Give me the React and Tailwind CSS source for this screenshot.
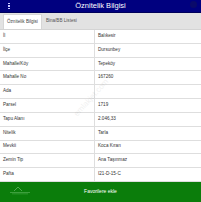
import React from "react";

const rows = [
  ["İl", "Balıkesir"],
  ["İlçe", "Dursunbey"],
  ["Mahalle/Köy", "Tepeköy"],
  ["Mahalle No", "167260"],
  ["Ada", ""],
  ["Parsel", "1719"],
  ["Tapu Alanı", "2.046,33"],
  ["Nitelik", "Tarla"],
  ["Mevkii", "Koca Kıran"],
  ["Zemin Tip", "Ana Taşınmaz"],
  ["Pafta", "I21-D-15-C"],
];

export default function App() {
  return (
    <div
      className="relative w-[201px] h-[202px] flex flex-col bg-white overflow-hidden"
      style={{ fontFamily: '"Liberation Sans", Arial, sans-serif' }}
    >
      <div className="h-[13px] bg-[#00007f] border-b border-[#00005a] flex items-center relative">
        <div className="w-[18px] flex flex-col items-center gap-[1px]">
          <span className="w-[1.5px] h-[1.5px] bg-[#c8c8ff]" />
          <span className="w-[1.5px] h-[1.5px] bg-[#c8c8ff]" />
          <span className="w-[1.5px] h-[1.5px] bg-[#c8c8ff]" />
        </div>
        <div className="flex-1 text-center text-white text-[7.5px] leading-none pr-[18px]">
          Öznitelik Bilgisi
        </div>
        <span className="absolute right-[4px] top-[1px] w-[7px] h-[7px] rounded-full bg-[#0a0a6a]" />
      </div>

      <div className="h-[17px] bg-[#e2e2e2] flex items-end px-[3px] border-b border-[#d4d4d4]">
        <div className="h-[15px] px-[3px] bg-white flex items-center text-[4.6px] text-[#444] border-t border-x border-[#d6d6d6]">
          Öznitelik Bilgisi
        </div>
        <div className="h-[15px] px-[4px] flex items-center text-[4.6px] text-[#555]">
          Bina/BB Listesi
        </div>
      </div>

      <div className="flex-1 flex flex-col">
        {rows.map(([k, v]) => (
          <div
            key={k}
            className="flex-1 flex border-b border-[#dedede] text-[4.6px] text-[#333]"
          >
            <div className="w-[95px] pl-[3px] flex items-center border-r border-[#dedede]">
              {k}
            </div>
            <div className="flex-1 pl-[3px] flex items-center">{v}</div>
          </div>
        ))}
      </div>

      <div className="h-[20px] bg-[#0b7d0b] flex items-center relative">
        <svg
          className="absolute left-[8px] top-[3px]"
          width="24"
          height="10"
          viewBox="0 0 24 10"
        >
          <path d="M6 6 L10 2 L14 6" stroke="#5fb55f" strokeWidth="0.8" fill="none" />
          <rect x="2" y="7" width="20" height="0.8" fill="#4aa84a" />
          <rect x="4" y="8.6" width="16" height="0.6" fill="#4aa84a" />
        </svg>
        <div className="flex-1 text-center text-white text-[5px]">
          Favorilere ekle
        </div>
      </div>

      <div className="absolute left-[68px] top-[92px] -rotate-[48deg] text-[8px] text-[#000] opacity-[0.06] pointer-events-none">
        emlakjet.com
      </div>
    </div>
  );
}
